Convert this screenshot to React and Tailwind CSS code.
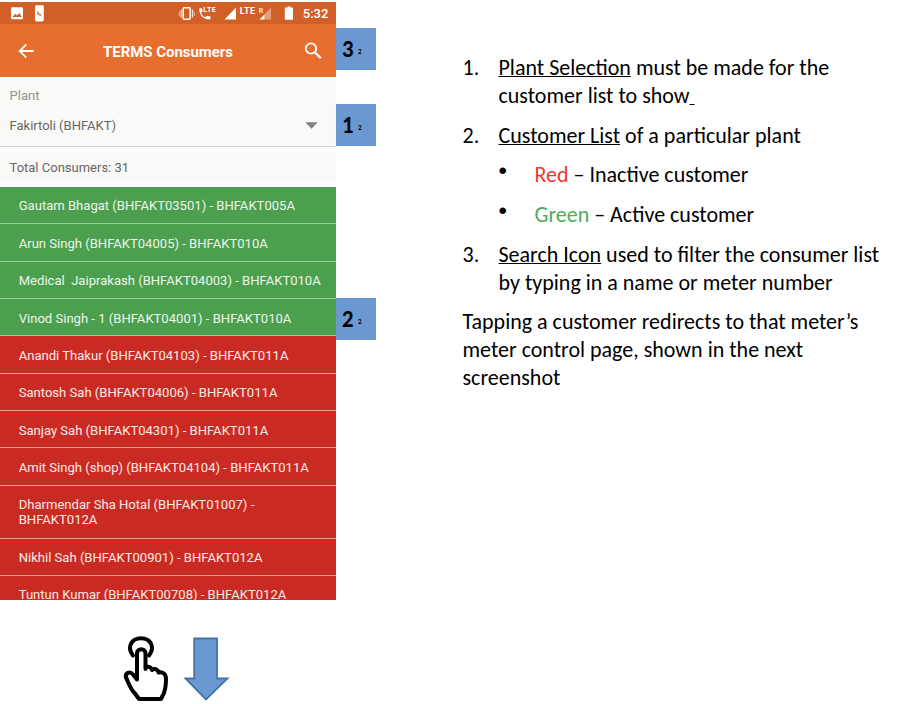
import React from "react";

const consumers = [
  { name: "Gautam Bhagat (BHFAKT03501) - BHFAKT005A", active: true, size: "h-[37px] pt-px" },
  { name: "Arun Singh (BHFAKT04005) - BHFAKT010A", active: true, size: "h-[38px] pt-px" },
  { name: "Medical\u00a0 Jaiprakash (BHFAKT04003) - BHFAKT010A", active: true, size: "h-[37px] pt-px" },
  { name: "Vinod Singh - 1 (BHFAKT04001) - BHFAKT010A", active: true, size: "h-[37px] pt-0.5" },
  { name: "Anandi Thakur (BHFAKT04103) - BHFAKT011A", size: "h-[38px] pt-px" },
  { name: "Santosh Sah (BHFAKT04006) - BHFAKT011A", size: "h-[37px] pt-px" },
  { name: "Sanjay Sah (BHFAKT04301) - BHFAKT011A", size: "h-[37px] pt-0.5" },
  { name: "Amit Singh (shop) (BHFAKT04104) - BHFAKT011A", size: "h-[38px] pt-px" },
  { name: "Dharmendar Sha Hotal (BHFAKT01007) - BHFAKT012A", size: "h-[53px]" },
  { name: "Nikhil Sah (BHFAKT00901) - BHFAKT012A", size: "h-[37px] pt-px" },
  { name: "Tuntun Kumar (BHFAKT00708) - BHFAKT012A", size: "h-[37px]" },
];

function StatusBar() {
  return (
    <div className="flex h-[22px] items-center bg-[#d06028] text-white">
      <svg className="h-[22px] w-[336px]" viewBox="0 2 336 22" fill="#fff">
        <rect x="11" y="7.2" width="12" height="12" rx="1.2" />
        <path d="M12.5 17l2.8-3.2 1.8 1.7 2.3-2.6 2.4 4.1z" fill="#d06028" />
        <rect x="35" y="5.2" width="8.8" height="16.2" rx="1.4" />
        <path d="M37.3 11c-.6 3 1.4 5 4 4.6l-.4-1.5-1.3.1c-.8-.5-1-1.2-.9-2z" fill="#d06028" />
        <g fill="none" stroke="#fff">
          <rect x="183.2" y="7.7" width="7" height="11.6" rx="1" strokeWidth="1.5" />
          <path d="M181.2 9.5v8M192.5 9.5v8" strokeWidth="1.2" opacity=".8" />
          <path d="M179.2 11.5v4.5M194.3 11.5v4.5" strokeWidth="1" opacity=".6" />
        </g>
        <path d="M199.2 8.2h2.7l.7 3.3-1.6 1.6c1 2 2.2 3.3 4.1 4.2l1.6-1.6 3.7.9v2.7c-6.8.5-11.6-4.6-11.2-11.1z" />
        <path d="M224.5 19.5h11.5v-12z" />
        <path d="M259.5 19.5h5v-5z" />
        <path d="M264.5 19.5v-5.5l6.5-6v11.5z" opacity=".4" />
        <path d="M286.2 7.6h1.3v-1.2h3v1.2h1.9q.6 0 .6.6v11q0 .6-.6.6h-7q-.6 0-.6-.6v-11q0-.6.6-.6z" />
        <g fontFamily="Roboto, sans-serif" fontWeight="700">
          <text x="203.3" y="11.8" fontSize="7" textLength="12.5">LTE</text>
          <text x="239.8" y="14" fontSize="9" textLength="15.3">LTE</text>
          <text x="258.8" y="12.6" fontSize="7" opacity=".8">R</text>
        </g>
        <text x="302.8" y="18.2" fontFamily="Roboto, sans-serif" fontWeight="500" fontSize="13">5:32</text>
      </svg>
    </div>
  );
}

function AppBar() {
  return (
    <header className="flex h-[53px] items-center bg-[#e86e30] text-white">
      <svg className="ml-[18px] h-4 w-4" viewBox="0 0 16 16" fill="none" stroke="#fff" strokeWidth="1.8">
        <path d="M15.7 8H2.2M8.3 1.4L1.7 8l6.6 6.6" />
      </svg>
      <h1 className="ml-[69px] w-[190px] whitespace-nowrap pt-0.5 text-[14.95px] font-bold leading-5">TERMS Consumers</h1>
      <svg className="ml-[11px] h-[18px] w-[18px]" viewBox="0 0 18 18" fill="none" stroke="#fff">
        <circle cx="7" cy="6.5" r="5.2" strokeWidth="1.8" />
        <path d="M11 10.5l5.8 5.8" strokeWidth="2.2" />
      </svg>
    </header>
  );
}

function Callout({ n, gap }) {
  return (
    <div className={`flex h-[42px] w-10 items-center bg-[#6a98d0] pl-1.5 font-[Carlito,Lato,sans-serif] font-bold text-black ${gap}`}>
      <span className="w-[15px] origin-left scale-x-95 text-[24px] leading-none">{n}</span>
      <span className="pl-px pt-1 text-[7px] leading-none">2</span>
    </div>
  );
}

export default function App() {
  return (
    <div className="flex h-[704px] w-[904px] overflow-hidden bg-white">
      <div className="flex w-[336px] flex-none flex-col pt-0.5 font-[Roboto,sans-serif]">
        <section className="h-[598px] overflow-hidden bg-[#fdfdfd]">
          <StatusBar />
          <AppBar />
          <div className="h-[70px] border-b border-[#d2d2d2] bg-[#f9f9f7] pl-[9.5px] pt-[11px]">
            <div className="text-[13.1px] leading-4 text-[#929292]">Plant</div>
            <div className="mt-3.5 flex items-center justify-between pr-[18px]">
              <span className="text-[13px] leading-4 text-[#666]">Fakirtoli (BHFAKT)</span>
              <svg className="mb-px h-[7px] w-[13px]" viewBox="0 0 13 7"><path d="M.3.3h12.4L6.5 6.8z" fill="#80807e" /></svg>
            </div>
          </div>
          <div className="mb-[5px] mt-[5px] flex h-[30px] items-center bg-[#f9f9f7] pl-[9.5px] pt-0.5 text-[13px] text-[#666]">
            Total Consumers: 31
          </div>
          <ul>
            {consumers.map((c) => (
              <li
                key={c.name}
                className={`flex items-center border-b pl-[18.7px] pr-[14px] text-[13.07px] leading-[15px] text-white/90 ${c.size} ${
                  c.active ? "border-[#9dcb9f] bg-[#4b9f4e]" : "border-[#e39a96] bg-[#c92b22]"
                }`}
              >
                {c.name}
              </li>
            ))}
          </ul>
        </section>
        <div className="flex pl-[123px] pt-[35px]">
          <svg className="h-[67px] w-[46px]" viewBox="0 0 46 67" fill="none" stroke="#000" strokeWidth="4" strokeLinejoin="round" strokeLinecap="round">
            <path d="M10 20.5C3.5 12 8.5 3.3 18 3.3s14.5 8.7 8 17.2" />
            <path d="M14 43V18.5c0-5.6 8.5-5.6 8.5 0V34M22.5 32.500c2.800-1.500 6-.5 6.500 2.500 3-2 6-.5 6.500 2.500 4.500-1 7.500 1.500 7.500 6.500 0 8-.5 12-3.500 17l-1.500 3H16L12 58.500C7 53.500 5.500 47.500 3 42.500c-1-5 4-6.500 7-3l4 5" />
          </svg>
          <svg className="ml-[15px] mt-[2px] h-[65px] w-[46px]" viewBox="0 0 46 65" fill="#6a98d0" stroke="#4772a3" strokeWidth="1.8">
            <path d="M10.2 1.5H33v40h10.5L22 62.5 1.5 41.5h8.7z" />
          </svg>
        </div>
      </div>
      <aside className="w-10 flex-none pt-7">
        <Callout n="3" gap="" />
        <Callout n="1" gap="mt-[34px]" />
        <Callout n="2" gap="mt-[152px]" />
      </aside>
      <main className="ml-[86.5px] whitespace-nowrap pt-[54px] font-[Carlito,Lato,sans-serif] text-[22px] leading-[27.75px] text-black">
        <ol>
          <li className="flex">
            <span className="w-[36px]">1.</span>
            <div><u className="decoration-1">Plant Selection</u> must be made for the<br />customer list to show<u className="decoration-1">&nbsp;</u></div>
          </li>
          <li className="mt-3 flex">
            <span className="w-[36px]">2.</span>
            <div>
              <u className="decoration-1">Customer List</u> of a particular plant
              <ul>
                <li className="mt-3 flex"><span className="-mt-1 mb-1 w-[36px] font-['Liberation_Sans',sans-serif] text-[24px]">•</span><span><span className="text-[#ed3a2f]">Red</span> – Inactive customer</span></li>
                <li className="mt-3 flex"><span className="-mt-1 mb-1 w-[36px] font-['Liberation_Sans',sans-serif] text-[24px]">•</span><span><span className="text-[#4bae57]">Green</span> – Active customer</span></li>
              </ul>
            </div>
          </li>
          <li className="mt-3 flex">
            <span className="w-[36px]">3.</span>
            <div><u className="decoration-1">Search Icon</u> used to filter the consumer list<br />by typing in a name or meter number</div>
          </li>
        </ol>
        <p className="mt-3">Tapping a customer redirects to that meter’s<br />meter control page, shown in the next<br />screenshot</p>
      </main>
    </div>
  );
}
